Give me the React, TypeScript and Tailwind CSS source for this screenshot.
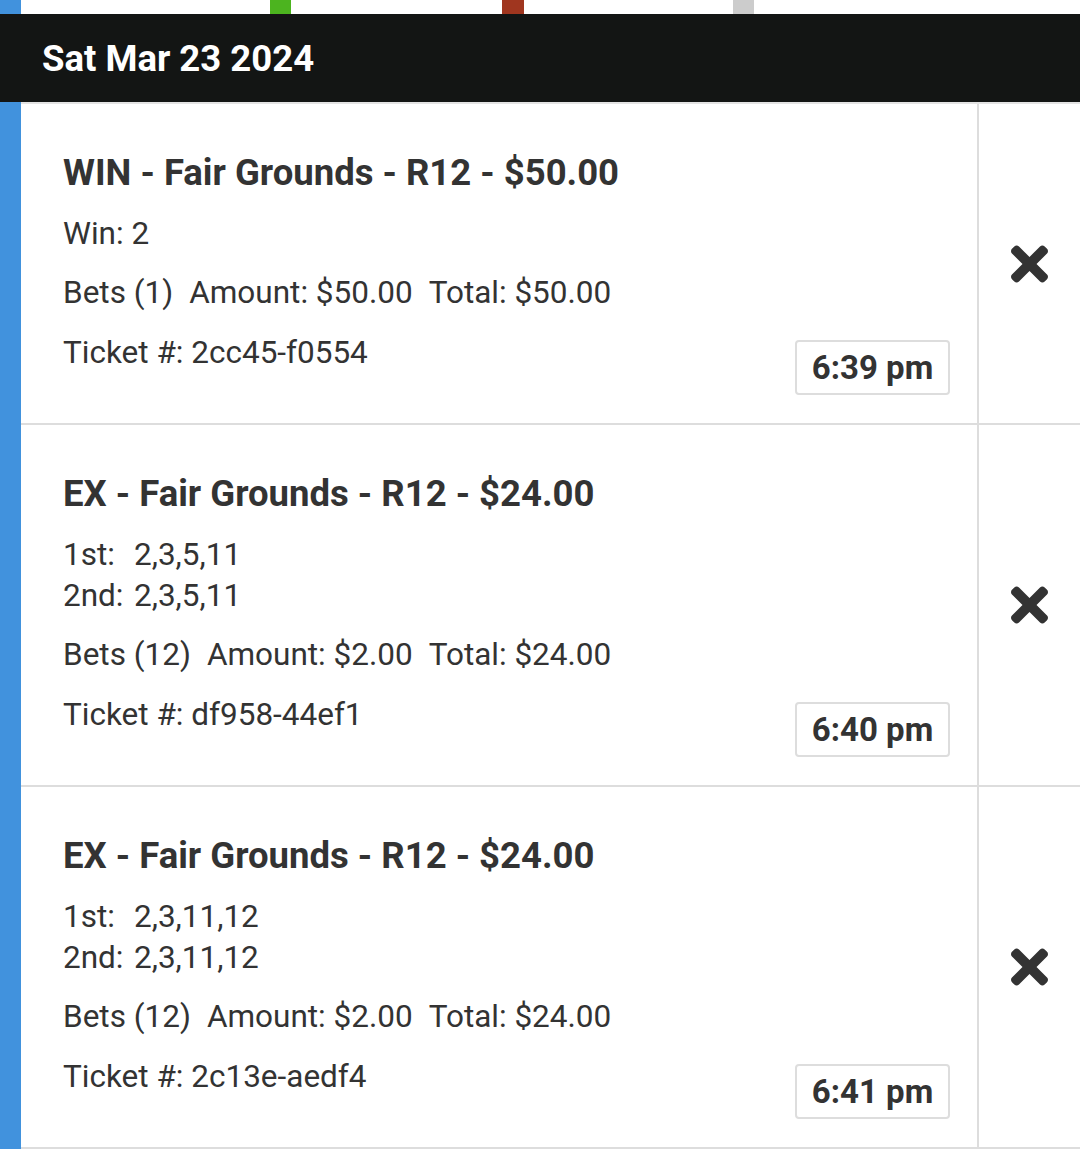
import React from "react";

function XIcon() {
  return (
    <svg viewBox="0 0 352 512" className="w-[37px] h-[54px]" fill="#333333">
      <path d="M242.72 256l100.07-100.07c12.280-12.280 12.280-32.190 0-44.480l-22.240-22.240c-12.280-12.280-32.190-12.280-44.480 0L176 189.280 75.930 89.210c-12.280-12.280-32.190-12.280-44.480 0L9.210 111.450c-12.280 12.280-12.280 32.190 0 44.480L109.280 256 9.210 356.070c-12.280 12.280-12.280 32.190 0 44.480l22.240 22.240c12.280 12.280 32.200 12.280 44.480 0L176 322.720l100.070 100.070c12.280 12.280 32.200 12.280 44.480 0l22.240-22.240c12.280-12.280 12.280-32.190 0-44.480L242.720 256z" />
    </svg>
  );
}

type Bet = {
  title: string;
  lines: [string, string][];
  bets: string;
  amount: string;
  total: string;
  ticket: string;
  time: string;
};

const bets: Bet[] = [
  {
    title: "WIN - Fair Grounds - R12 - $50.00",
    lines: [["Win:", "2"]],
    bets: "Bets (1)",
    amount: "Amount: $50.00",
    total: "Total: $50.00",
    ticket: "Ticket #: 2cc45-f0554",
    time: "6:39 pm",
  },
  {
    title: "EX - Fair Grounds - R12 - $24.00",
    lines: [
      ["1st:", "2,3,5,11"],
      ["2nd:", "2,3,5,11"],
    ],
    bets: "Bets (12)",
    amount: "Amount: $2.00",
    total: "Total: $24.00",
    ticket: "Ticket #: df958-44ef1",
    time: "6:40 pm",
  },
  {
    title: "EX - Fair Grounds - R12 - $24.00",
    lines: [
      ["1st:", "2,3,11,12"],
      ["2nd:", "2,3,11,12"],
    ],
    bets: "Bets (12)",
    amount: "Amount: $2.00",
    total: "Total: $24.00",
    ticket: "Ticket #: 2c13e-aedf4",
    time: "6:41 pm",
  },
];

function Card({ b }: { b: Bet }) {
  const single = b.lines.length === 1;
  return (
    <div className="flex border-b-2 border-[#dddddd]">
      <div className="flex-1 border-r-2 border-[#dddddd] pl-[42px] pr-[27px] pt-[49px] pb-[28px]">
        <div className="text-[36.5px] leading-[40px] font-bold text-[#333333]">{b.title}</div>
        <div className="mt-[20px] text-[31.5px] leading-[41px] text-[#333333]">
          {b.lines.map(([k, v], i) => (
            <div key={i} className="flex">
              {single ? (
                <span>
                  {k} {v}
                </span>
              ) : (
                <>
                  <span className="inline-block w-[71px]">{k}</span>
                  <span>{v}</span>
                </>
              )}
            </div>
          ))}
        </div>
        <div className="mt-[18px] text-[31.5px] leading-[41px] text-[#333333] flex gap-[16px]">
          <span>{b.bets}</span>
          <span>{b.amount}</span>
          <span>{b.total}</span>
        </div>
        <div className="mt-[19px] flex justify-between items-start">
          <span className="text-[31.5px] leading-[41px] text-[#333333]">{b.ticket}</span>
          <span className="mt-[8px] h-[55px] w-[155px] flex items-center justify-center border-2 border-[#dddddd] rounded-[4px] text-[33px] font-bold text-[#333333]">
            {b.time}
          </span>
        </div>
      </div>
      <div className="w-[101px] flex items-center justify-center">
        <XIcon />
      </div>
    </div>
  );
}

export default function App() {
  return (
    <div className="w-[1080px] min-h-[1173px] bg-white" style={{ fontFamily: "Roboto, 'Noto Sans', sans-serif" }}>
      <div className="flex h-[14px]">
        <div className="w-[21px] bg-[#4192dd]" />
        <div className="w-[249px]" />
        <div className="w-[21px] bg-[#4cb41f]" />
        <div className="w-[211px]" />
        <div className="w-[22px] bg-[#a0361f]" />
        <div className="w-[209px]" />
        <div className="w-[21px] bg-[#cccccc]" />
      </div>
      <div className="h-[88px] bg-[#131514] flex items-center pl-[42px] pt-[3px]">
        <span className="text-white text-[36.5px] font-bold">Sat Mar 23 2024</span>
      </div>
      <div className="flex">
        <div className="w-[21px] bg-[#4192dd]" />
        <div className="flex-1 border-t-2 border-[#e3e3e3]">
          {bets.map((b, i) => (
            <Card key={i} b={b} />
          ))}
        </div>
      </div>
    </div>
  );
}
